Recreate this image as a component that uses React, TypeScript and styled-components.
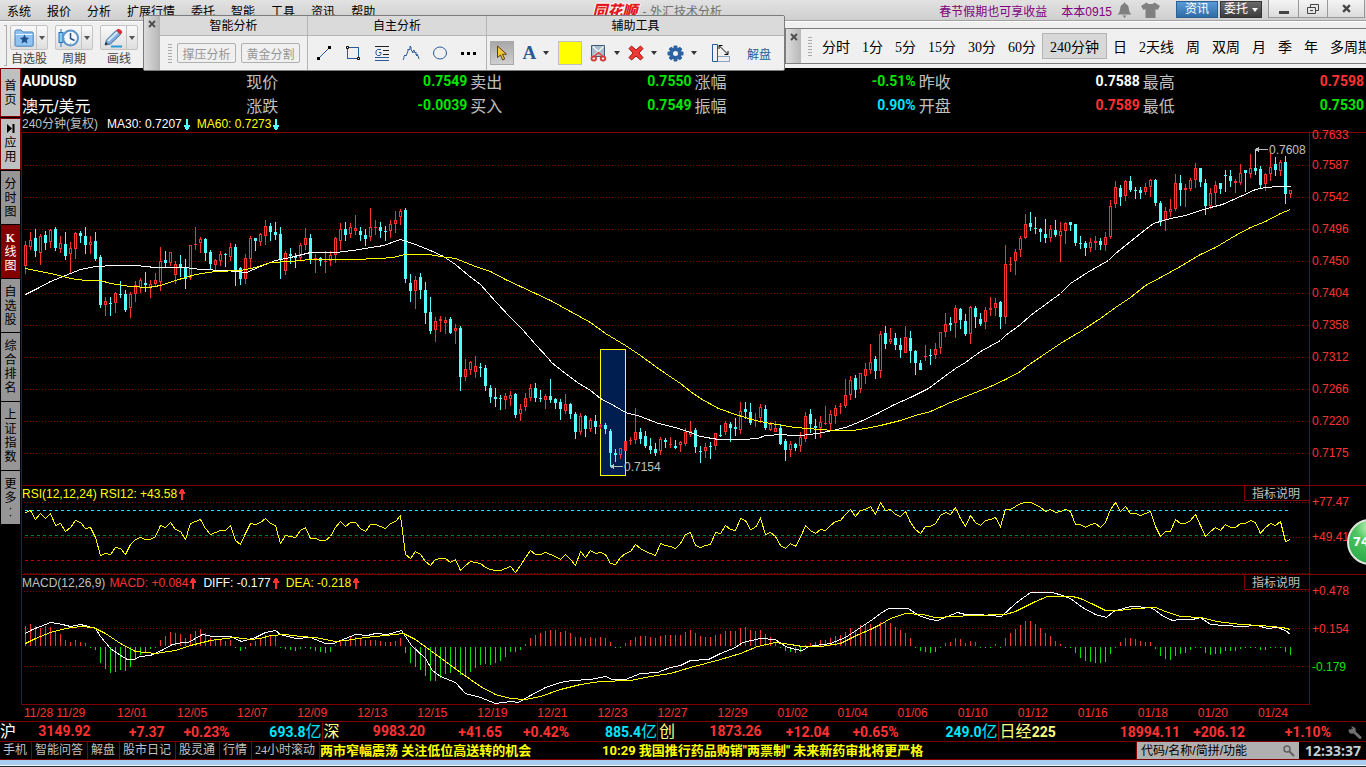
import React from 'react';
import styled, { createGlobalStyle, css } from 'styled-components';

const MAROON = '#800000';
const RED = '#ff3232';
const GREEN = '#00e600';
const CYAN = '#00e5ff';
const CANDLE_DOWN = '#54ffff';
const SANS = '"Liberation Sans", "Noto Sans CJK SC", sans-serif';
const SERIF = '"Liberation Serif", "Noto Sans CJK SC", serif';
const BOLD_NUM = 'Roboto, "Noto Sans CJK SC", sans-serif';

const GlobalStyle = createGlobalStyle`
  * { box-sizing: border-box; }
  body { margin: 0; background: #000; font-family: ${SANS}; font-size: 12px; overflow: hidden; }
  button { margin: 0; padding: 0; border: 0; background: none; font: inherit; color: inherit; white-space: nowrap; cursor: pointer; }
  a { color: inherit; text-decoration: none; white-space: nowrap; }
  svg { display: block; }
`;

/* ---------- market data ---------- */

const STEP = 5;
const FIRST_X = 25;
const xOf = (i: number) => FIRST_X + i * STEP;

// Each bar is direction, high, low, body top, body bottom, in thirds of a pixel below the base.
const SESSIONS: { base: number; bars: string }[] = [
  {
    base: 60,
    bars: `r 543 643 555 618|r 515 570 540 561|c 507 591 534 573|r 522 614 528 579|c 513 570 524 549|r 507 564 510 546|c 501 573 507 563|r 528 579 549 567|c 516 600 552 588|r 545 643 564 582|r 516 597 519 567|c 514 549 519 528|c 501 582 528 556|r 528 582 546 555|c 516 603 543 598|c 585 744 591 735|r 711 768 723 735|c 711 768 729 732|r 696 759 699 730|c 663 714 702 705|c 690 756 702 750|r 696 774 702 744|r 663 726 675 702|r 654 699 660 684|c 636 696 669 675|r 660 714 672 682|r 639 678 660 672|r 561 693 603 666|c 573 621 600 609|r 576 618 577 609|r 603 672 612 645|c 585 651 612 621|c 597 687 624 657|r 555 660 555 654|r 501 570 552 555|r 531 579 537 549|c 534 603 537 579|c 570 630 576 612|r 597 630 600 615|r 573 618 582 603|c 579 621 582 585|r 549 603 561 591|c 552 678 561 636|c 621 675 624 657|r 582 672 594 657|r 528 627 534 597|c 534 573 534 543|r 519 558 522 546|r 480 555 498 528|c 489 543 498 516|c 486 540 517 524|c 501 657 522 600|r 573 645 579 633|c 564 612 582 588|c 579 624 591 594|r 549 603 555 594|r 504 570 534 555|c 522 612 534 597|r 582 639 594 597|c 591 618 594 603|r 573 639 603 607|r 573 618 585 603|r 531 609 535 585`,
  },
  {
    base: 190,
    bars: `r 99 180 117 153|c 96 153 117 135|r 99 144 111 132|r 75 135 114 123|c 111 153 123 135|c 117 168 135 147|r 54 153 111 141|r 90 135 111 114|c 96 144 111 123|c 108 153 123 126|r 90 144 102 123|r 63 129 90 102|r 57 105 63 81|c 54 279 60 267|c 252 336 279 303|r 258 357 270 303|c 249 327 261 300|c 276 402 300 369|c 321 432 366 423|r 381 456 393 420|r 378 426 387 393|r 381 432 390 399|c 381 432 387 429|r 402 462 414 423|c 408 603 414 561|r 507 573 537 561|r 513 555 516 540|r 498 564 528 546|c 519 561 531 534|c 525 603 534 588|c 585 639 594 621|c 594 651 621 627|c 615 660 624 627|r 609 657 618 630|r 603 648 615 627|c 609 684 612 675|r 642 693 657 672|r 609 663 624 651|r 582 633 594 624|c 579 636 594 624|c 600 636 624 627|r 612 657 618 630|c 567 639 618 630|c 624 657 627 639|c 627 690 636 657|r 612 672 642 663|c 639 687 642 672|c 666 747 672 726|r 669 735 678 726|c 675 741 678 717|r 684 726 690 717|c 675 732 693 711|r 702 717 706 712|c 699 732 705 717|c 717 831 723 789|c 777 816 789 795|r 774 807 774 795|f 753 783 753 783|r 741 765 750 753|r 654 762 726 750|c 714 762 726 747|c 723 774 738 768|c 744 792 768 780|c 759 798 777 789|r 741 795 747 783|c 744 774 750 756|r 741 774 762 765|c 750 777 768 774`,
  },
  {
    base: 290,
    bars: `r 453 486 456 465|r 414 468 426 462|r 393 441 423 435|c 414 489 420 471|c 468 519 483 486|r 459 504 471 483|c 456 507 468 471|r 429 480 429 468|c 405 441 435 438|r 393 435 399 426|c 396 456 402 414|c 384 438 411 417|r 336 432 363 420|c 336 387 357 366|c 339 405 366 399|r 369 411 390 393|r 342 399 351 384|c 345 420 357 414|r 396 423 402 420|r 393 426 414 426|c 402 465 414 462|c 447 513 453 480|r 453 501 462 480|c 459 483 462 474|r 426 486 441 468|r 366 456 378 447|c 357 429 372 402|c 387 447 408 414|r 378 444 396 414|r 348 405 399 402|r 360 420 372 402|r 345 402 354 378|r 339 372 348 351|r 267 354 315 348|r 258 330 270 315|c 255 324 264 300|r 249 309 249 297|r 219 282 237 258|r 162 252 216 240|c 198 267 207 243|r 123 264 132 243|c 108 177 129 162|r 114 162 147 156|c 129 180 144 165|c 144 204 165 180|r 108 189 141 189|c 123 219 144 183|c 180 255 183 219|c 210 240 219 240|r 165 213 198 201|c 177 225 195 198|r 159 207 177 195|r 126 192 126 174|r 69 141 102 126|c 81 123 99 105|r 45 144 54 99|c 54 117 57 90|c 72 138 93 132|r 48 162 51 132|c 48 114 54 81|c 69 108 87 102|r 51 117 60 96|r 21 78 54 60|r 24 78 39 54|c 33 117 36 81`,
  },
  {
    base: 120,
    bars: `r 375 612 432 591|r 411 456 432 435|r 387 465 396 423|r 348 411 354 390|r 282 357 312 354|c 276 333 309 321|c 291 342 324 327|c 324 366 327 336|c 297 369 342 354|r 315 366 327 354|c 300 351 330 345|r 306 426 333 348|r 306 372 309 333|c 306 333 306 315|c 312 378 312 369|c 348 387 369 372|c 363 408 369 384|r 354 396 366 384|r 348 390 363 369|c 354 390 363 375|r 336 393 351 375|r 240 357 258 351|r 183 264 201 252|c 195 258 204 231|r 180 243 183 228|c 168 216 183 210|c 201 237 210 213|c 201 237 210 219|r 189 225 201 216|r 177 231 180 201|c 177 258 180 249|c 243 318 249 303|r 261 333 273 300|r 237 291 267 276|r 162 273 189 267|c 165 258 189 210|r 192 261 204 210|r 174 213 180 207|r 129 204 144 180|c 144 201 144 186|c 177 285 189 258|r 204 267 219 258|r 183 255 195 219|c 189 222 189 207|c 150 216 165 168|c 150 201 168 183|r 177 219 183 189|r 132 195 159 189|c 150 216 150 159|r 102 174 144 162|c 87 165 144 153|c 138 207 147 195|r 159 213 162 192|r 99 183 141 162|c 111 168 132 150|r 120 168 126 153|c 108 252 126 222|r 210 234 210 222`,
  },
];

type Candle = { kind: string; high: number; low: number; top: number; bottom: number };

const CANDLES: Candle[] = SESSIONS.flatMap(({ base, bars }) =>
  bars.split('|').map((bar) => {
    const [kind, ...n] = bar.split(' ');
    const [high, low, top, bottom] = n.map((v) => base + Math.round(Number(v) / 3));
    return { kind, high, low, top, bottom };
  }),
);

const MA30 =
  '25,294 37,288 50,281 65,275 80,269 95,266 115,265 135,265 155,267 185,267 200,269 225,270 246,272 260,266 275,260 290,257 310,252 335,252 352,250 365,248 383,245 400,239 415,244 430,250 443,256 455,264 468,275 480,284 495,301 510,317 522,329 535,344 548,358 551,362 565,373 577,382 590,390 600,398 615,406 625,412 640,416 658,423 675,427 690,432 700,436 718,439 742,439 757,438 765,435 782,434 790,435 800,435 817,433 832,430 845,427 860,421 877,413 892,405 910,397 928,388 940,379 955,368 965,362 980,351 1000,340 1005,335 1020,324 1030,315 1045,304 1060,293 1070,283 1087,272 1108,260 1115,253 1130,241 1145,229 1153,223 1170,218 1185,215 1197,211 1210,207 1222,204 1240,196 1255,189 1265,187 1278,186 1290,186';
const MA60 =
  '25,268 40,271 55,274 70,278 85,280 100,280 110,283 130,286 148,287 160,285 175,280 195,274 215,271 240,270 255,267 270,262 290,261 310,259 353,259 378,258 393,257 400,255 405,254 428,254 440,256 455,258 465,262 475,266 490,271 505,279 520,286 535,293 550,300 570,311 590,322 605,333 625,345 640,355 655,366 668,375 680,383 690,391 700,398 718,408 735,414 755,420 770,423 795,427 820,429 832,430 852,430 865,428 880,425 900,420 915,415 930,411 950,402 970,394 990,386 1005,379 1020,371 1026,366 1045,353 1060,343 1080,331 1100,318 1115,307 1130,297 1145,285 1160,277 1180,266 1200,254 1215,247 1235,235 1250,227 1265,221 1280,213 1290,209';
const DIFF =
  '25,633 32,629 40,626 50,622 62,624 70,626 80,624 88,626 95,628 100,636 110,648 120,655 127,659 133,659 140,656 150,655 163,649 172,644 182,642 188,642 202,634 212,636 230,636 241,641 255,637 265,632 275,630 280,634 295,638 310,637 325,643 333,643 345,638 355,634 367,635 375,633 387,634 401,630 411,645 425,658 432,670 440,676 455,682 465,693 480,697 495,703 510,701 518,702 530,695 545,687 560,682 572,680 590,679 605,676 612,679 625,679 640,673 657,672 670,667 680,665 690,660 708,659 720,653 735,647 742,642 760,638 775,639 785,646 795,649 802,650 808,646 830,643 845,637 860,627 872,619 880,613 888,608 908,608 918,615 930,619 937,620 942,618 957,612 965,614 977,614 990,615 1001,616 1015,603 1030,592 1052,592 1062,595 1070,598 1082,607 1095,614 1106,617 1113,611 1130,606 1150,607 1155,610 1163,616 1172,620 1180,619 1192,619 1200,617 1210,624 1225,625 1240,626 1257,625 1267,628 1277,627 1285,630 1290,634';
const DEA =
  '25,643 35,638 50,632 65,628 80,626 93,627 105,633 120,643 135,651 155,653 175,650 190,645 210,640 225,638 235,637 250,639 260,638 270,635 285,634 300,636 315,637 335,641 345,640 365,637 385,635 403,633 415,639 430,650 445,661 460,672 480,686 495,694 510,698 525,699 540,696 560,689 580,684 600,681 630,680 650,676 670,673 690,667 705,663 720,659 740,653 757,646 775,642 790,644 802,646 820,646 840,643 858,634 870,629 880,624 890,618 905,613 922,614 935,617 955,616 970,615 1005,614 1015,611 1027,605 1035,601 1047,596 1072,596 1080,598 1093,604 1105,610 1118,610 1135,608 1155,607 1165,611 1180,616 1200,617 1217,621 1240,624 1260,625 1282,627 1290,629';

const RSI = [
  97, 91, 118, 100, 115, 100, 136, 130, 153, 142, 121, 127, 145, 142, 170, 226, 220, 223, 202, 205, 223, 193, 178, 172,
  178, 176, 169, 136, 142, 127, 148, 154, 176, 128, 124, 118, 145, 163, 157, 151, 151, 136, 181, 193, 160, 130, 133,
  127, 115, 129, 136, 190, 166, 169, 172, 151, 142, 174, 175, 181, 181, 169, 142, 124, 139, 127, 127, 145, 154, 133,
  133, 139, 145, 130, 122, 106, 223, 235, 214, 222, 244, 256, 238, 235, 235, 247, 238, 271, 256, 243, 247, 250, 262,
  268, 271, 271, 265, 258, 277, 256, 232, 211, 223, 223, 217, 223, 229, 238, 223, 238, 256, 214, 232, 211, 220, 216,
  221, 250, 253, 232, 218, 213, 193, 205, 213, 220, 226, 190, 196, 199, 205, 190, 163, 157, 195, 202, 195, 192, 157,
  160, 136, 147, 151, 115, 119, 148, 140, 115, 163, 157, 169, 196, 205, 190, 199, 172, 136, 151, 160, 148, 151, 136,
  124, 121, 103, 86, 109, 91, 87, 79, 103, 67, 91, 86, 103, 109, 94, 127, 148, 160, 139, 139, 130, 106, 97, 101, 82,
  115, 139, 106, 127, 136, 121, 118, 112, 139, 88, 88, 79, 70, 67, 67, 73, 80, 94, 86, 97, 94, 86, 94, 133, 133, 142,
  133, 130, 142, 127, 88, 67, 94, 79, 100, 100, 106, 100, 92, 139, 169, 154, 154, 118, 130, 130, 121, 103, 136, 169,
  154, 142, 151, 133, 142, 142, 130, 130, 121, 127, 160, 142, 130, 136, 124, 184, 178,
];

const HISTOGRAM = [
  20, 22, 20, 18, 20, 19, 15, 12, 6, 4, 6, 4, 3, -1, -3, -16, -22, -26, -25, -23, -24, -20, -13, -8, -6, -2, -1, 6, 10,
  14, 13, 12, 8, 12, 15, 17, 13, 8, 6, 6, 5, 6, -1, -4, -2, 3, 5, 8, 11, 11, 10, -1, -2, -3, -4, -2, -1, -2, -4, -5,
  -6, -5, 1, 5, 6, 9, 9, 8, 6, 6, 6, 5, 4, 4, 5, 8, -6, -16, -20, -23, -29, -34, -34, -31, -27, -26, -23, -28, -28,
  -25, -21, -18, -17, -18, -16, -14, -10, -5, -5, -3, 2, 8, 11, 13, 15, 16, 16, 14, 15, 13, 9, 9, 8, 9, 8, 9, 8, 4, -1,
  -1, 3, 6, 9, 10, 10, 9, 8, 10, 11, 11, 11, 11, 14, 16, 13, 10, 9, 9, 11, 12, 15, 15, 15, 18, 19, 16, 15, 16, 12, 9,
  4, -1, -4, -5, -6, -5, 1, 3, 4, 6, 6, 8, 10, 11, 14, 18, 16, 21, 21, 22, 20, 24, 23, 23, 19, 16, 13, 8, -1, -4, -5,
  -6, -5, -1, 3, 4, 8, 7, 3, 5, 4, -1, -1, -1, 2, -1, 8, 13, 17, 21, 25, 25, 22, 18, 13, 10, 5, 2, -1, -1, -6, -11,
  -14, -15, -16, -16, -15, -7, -1, 4, 8, 8, 7, 5, 4, 4, -2, -9, -12, -13, -9, -7, -6, -3, -1, -1, -6, -8, -7, -7, -4,
  -4, -4, -2, -1, -1, -1, -3, -3, -1, -1, -1, -5, -8,
];

const DATES = [
  '12/01', '12/05', '12/07', '12/09', '12/13', '12/15', '12/19', '12/21', '12/23', '12/27',
  '12/29', '01/02', '01/04', '01/06', '01/10', '01/12', '01/16', '01/18', '01/20', '01/24',
];
const PRICES = ['0.7587', '0.7542', '0.7496', '0.7450', '0.7404', '0.7358', '0.7312', '0.7266', '0.7220', '0.7175'];

/* ---------- frame ---------- */

const Page = styled.div`
  position: relative;
  display: flex;
  flex-direction: column;
  min-height: 100vh;
  overflow: hidden;
  background: #000;
`;

const TitleBar = styled.header`
  display: flex;
  align-items: center;
  height: 20px;
  padding-left: 7px;
  background: linear-gradient(#e2e2e2, #cfcfcf);
  color: #000;
`;

const Menu = styled.nav`
  display: flex;
  gap: 16px;
`;

const AppTitle = styled.div`
  display: flex;
  align-items: center;
  gap: 5px;
  margin: 0 auto;
  color: #707070;
`;

const Logo = styled.span`
  font: italic 900 15px/20px "Noto Sans CJK SC", sans-serif;
  color: #e01820;
  text-shadow: 1px 0 #fff, -1px 0 #fff, 0 1px #fff, 0 -1px #fff;
`;

const TitleTools = styled.div`
  display: flex;
  align-items: center;
  height: 100%;
  color: #800080;
`;

const TitleLink = styled.a`
  margin-right: 14px;
`;

const UserLink = styled.a`
  margin-right: 5px;
`;

const IconButton = styled.button<{ $after?: number }>`
  margin-right: ${(p) => p.$after ?? 9}px;
  color: #808080;
`;

const PillButton = styled.button<{ $blue?: boolean }>`
  width: 42px;
  height: 17px;
  margin: 0 2px 1px 0;
  border: 1px solid ${(p) => (p.$blue ? '#2c5f92' : '#333')};
  background: ${(p) => (p.$blue ? 'linear-gradient(#5a9ad6, #2f6ca8)' : 'linear-gradient(#6a6a6a, #3c3c3c)')};
  color: #fff;
  line-height: 15px;
  display: flex;
  align-items: center;
  justify-content: center;
  gap: 4px;
`;

const WindowButtons = styled.div`
  display: flex;
  height: 18px;
  margin: 0 1px 2px 4px;
  border: 1px solid #999;
  border-top: 0;
`;

const WindowButton = styled.button<{ $wide?: boolean }>`
  display: grid;
  place-items: center;
  width: ${(p) => (p.$wide ? 37 : 29)}px;
  color: #444;
  background: linear-gradient(#f4f4f4, #dcdcdc);
  & + & {
    border-left: 1px solid #999;
  }
`;

const Toolbar = styled.div`
  display: flex;
  gap: 7px;
  height: 48px;
  padding: 4px 0 0 4px;
  border-top: 1px solid #a0a0a0;
  background: #f0f0f0;
  box-shadow: inset 0 1px #fff;
`;

const ToolbarGrip = styled.span`
  width: 3px;
  margin: 0 -4px 2px 0;
  border: 1px solid #aaa;
  border-left: 0;
`;

const Tool = styled.div`
  display: flex;
  flex-direction: column;
  align-items: center;
  color: #444;
  line-height: 18px;
`;

const SplitButton = styled.div`
  display: flex;
  height: 25px;
  border: 1px solid #c4c4c4;
  border-radius: 2px;
  background: linear-gradient(#fafafa, #dedede);
`;

const SplitMain = styled.button`
  display: grid;
  place-items: center;
  width: 25px;
`;

const SplitCaret = styled.button`
  display: grid;
  place-items: center;
  width: 11px;
  border-left: 1px solid #c4c4c4;
  color: #555;
`;

const Caret = styled.i`
  width: 0;
  height: 0;
  border: 3px solid transparent;
  border-top: 4px solid currentColor;
  border-bottom: 0;
`;

/* ---------- floating palettes ---------- */

const palette = css`
  position: absolute;
  display: flex;
  border: 1px solid #7c7c7c;
  background: #f0f0f0;
  color: #000;
`;

const DrawPalette = styled.section`
  ${palette}
  left: 143px;
  top: 15px;
  width: 642px;
  height: 56px;
  border-radius: 2px;
`;

const PeriodPalette = styled.section`
  ${palette}
  left: 785px;
  right: 0;
  top: 28px;
  height: 36px;
  overflow: hidden;
  border-right: 0;
  font: 14px ${SERIF};
`;

const PaletteClose = styled.button`
  flex: none;
  width: 15px;
  padding-top: 4px;
  display: flex;
  justify-content: center;
  align-items: flex-start;
  background: linear-gradient(90deg, #dcdcdc, #b8b8b8);
  color: #505050;
`;

const PaletteGroup = styled.div<{ $grow: number }>`
  flex: ${(p) => p.$grow} 0 0;
  display: flex;
  flex-direction: column;
  border-left: 1px solid #b4b4b4;
`;

const GroupTitle = styled.h2`
  margin: 0;
  height: 20px;
  border-bottom: 1px solid #b4b4b4;
  background: #dadada;
  font: 12px/20px ${SANS};
  text-align: center;
`;

const GroupBody = styled.div<{ $gap: number; $pad: number }>`
  flex: 1;
  display: flex;
  align-items: center;
  gap: ${(p) => p.$gap}px;
  padding-left: ${(p) => p.$pad}px;
`;

const Grip = styled.span`
  flex: none;
  width: 4px;
  height: 20px;
  background: radial-gradient(circle, #aaa 1px, transparent 1px) 0 0 / 2px 3px;
  margin: auto 0;
`;

const OutlineButton = styled.button`
  width: 59px;
  height: 20px;
  border: 1px solid #b0b0b0;
  border-radius: 2px;
  color: #969696;
`;

const DrawButton = styled.button<{ $w: number }>`
  display: flex;
  align-items: center;
  justify-content: center;
  gap: 7px;
  width: ${(p) => p.$w}px;
  height: 24px;
  color: #2a5a96;
  ${Caret} {
    color: #333;
  }
`;

const PressedButton = styled(DrawButton)`
  border: 1px solid #a8a8a8;
  background: linear-gradient(#a8a8a8, #cfcfcf);
`;

const Swatch = styled.button`
  width: 24px;
  height: 24px;
  border: 1px solid #c0c0c0;
  background: #ff0;
`;

const LetterA = styled.span`
  font: bold 19px "Liberation Serif", serif;
`;

const Periods = styled.div`
  display: flex;
  align-items: center;
  padding-left: 4px;
`;

const PeriodGrip = styled(Periods)`
  padding-left: 7px;
`;

const PeriodButton = styled.button<{ $on?: boolean }>`
  height: 26px;
  padding: 0 6px;
  ${(p) =>
    p.$on &&
    css`
      padding: 0 7px;
      border: 1px solid #b4b4b4;
      background: #d8d8d8;
    `}
`;

/* ---------- body ---------- */

const Main = styled.main`
  flex: 1;
  display: flex;
`;

const SideTabs = styled.nav`
  flex: none;
  display: flex;
  flex-direction: column;
  gap: 1px;
  width: 21px;
  padding-right: 1px;
`;

const SideTab = styled.button<{ $h: number; $tone: 'light' | 'grey' | 'active' }>`
  display: flex;
  flex-direction: column;
  align-items: center;
  justify-content: center;
  height: ${(p) => p.$h}px;
  margin-left: 1px;
  line-height: 14px;
  background: #969696;
  color: #000;
  > svg {
    margin-bottom: 3px;
  }
  ${(p) =>
    p.$tone === 'light' &&
    css`
      margin: 0 -1px 0 0;
      border: 1px solid ${MAROON};
      background: #c0c0c0;
    `}
  ${(p) =>
    p.$tone === 'active' &&
    css`
      background: ${MAROON};
      color: #fff;
    `}
`;

const SerifBold = styled.b`
  font-family: "Liberation Serif", serif;
`;

const Dot = styled.span`
  line-height: 7px;
`;

const Content = styled.div`
  flex: 1;
  min-width: 0;
  display: flex;
  flex-direction: column;
`;

const Quotes = styled.dl`
  display: grid;
  grid-template-columns: repeat(6, 1fr);
  grid-auto-rows: 24px;
  align-items: center;
  margin: 0;
  padding-top: 1px;
`;

const Quote = styled.div`
  display: flex;
  justify-content: space-between;
  align-items: center;
  padding: 0 2px 0 1px;
  white-space: nowrap;
`;

const QuoteLabel = styled.dt`
  font-size: 16px;
  color: #c0c0c0;
`;

const QuoteValue = styled.dd<{ $c: string }>`
  margin: 0;
  font: bold 14px ${BOLD_NUM};
  color: ${(p) => p.$c};
`;

const PairName = styled.div<{ $bold?: boolean }>`
  padding-left: 1px;
  color: #fff;
  font: ${(p) => (p.$bold ? `bold 14px ${BOLD_NUM}` : `16px ${SANS}`)};
`;

const Legend = styled.div<{ $h: number; $pad?: number }>`
  display: flex;
  align-items: center;
  height: ${(p) => p.$h}px;
  padding-left: ${(p) => p.$pad ?? 0}px;
  line-height: ${(p) => p.$h}px;
  white-space: pre;
`;

const LegendItem = styled.span<{ $c: string; $gap?: number }>`
  display: flex;
  align-items: center;
  gap: 2px;
  margin-right: ${(p) => p.$gap ?? 0}px;
  color: ${(p) => p.$c};
`;

const HelpButton = styled.button`
  align-self: flex-start;
  width: 65px;
  height: 15px;
  margin-left: auto;
  padding-right: 2px;
  border: solid ${MAROON};
  border-width: 0 0 1px 1px;
  color: #c0c0c0;
  line-height: 16px;
`;

const Panel = styled.section<{ $grow?: boolean }>`
  flex: ${(p) => (p.$grow ? '1 0 353px' : 'none')};
  display: flex;
  border-top: 1px solid ${MAROON};
`;

const Plot = styled.div`
  flex: 1;
  min-width: 0;
  display: flex;
  flex-direction: column;
  border-left: 1px solid ${MAROON};
`;

const Chart = styled.svg<{ $h: number }>`
  width: 100%;
  height: ${(p) => p.$h}px;
  flex: 1 0 auto;
`;

const Axis = styled.div<{ $pad?: number; $gap?: number }>`
  flex: none;
  display: flex;
  flex-direction: column;
  gap: ${(p) => p.$gap ?? 0}px;
  width: 57px;
  padding: ${(p) => p.$pad ?? 0}px 0 0 2px;
  border-left: 1px solid ${MAROON};
  color: ${RED};
`;

const AxisMark = styled.span<{ $h: number; $c?: string; $lh?: number }>`
  height: ${(p) => p.$h}px;
  line-height: ${(p) => p.$lh ?? p.$h}px;
  color: ${(p) => p.$c ?? RED};
`;

const DateRow = styled.div`
  display: flex;
  height: 17px;
  margin-right: 56px;
  padding-right: 7px;
  border-top: 1px solid ${MAROON};
  color: ${RED};
  line-height: 17px;
  text-align: center;
`;

const FirstDates = styled.span`
  display: flex;
  gap: 3px;
  width: 81px;
  padding-left: 3px;
`;

const DateMark = styled.span`
  flex: 1;
`;

/* ---------- footer ---------- */

const IndexRow = styled.div`
  display: flex;
  height: 20px;
  border-top: 1px solid ${MAROON};
  font: bold 14px ${BOLD_NUM};
  color: ${RED};
`;

const IndexGroup = styled.div<{ $basis: number; $cols: string }>`
  flex: ${(p) => p.$basis} 0 0;
  display: grid;
  grid-template-columns: ${(p) => p.$cols};
  align-items: center;
  text-align: right;
  white-space: nowrap;
  & + & {
    border-left: 1px solid ${MAROON};
    padding-left: 1px;
  }
`;

const IndexName = styled.div<{ $c: string }>`
  display: flex;
  align-items: center;
  justify-content: space-between;
  line-height: 19px;
  > span {
    color: ${(p) => p.$c};
  }
`;

const Big = styled.span`
  font: 16px/19px ${SANS};
`;

const Turnover = styled.span`
  display: flex;
  align-items: center;
  justify-content: flex-end;
  color: ${CYAN};
`;

const SettingsButton = styled.button`
  justify-self: end;
  margin-right: 4px;
`;

const StatusRow = styled.div`
  display: flex;
  height: 18px;
  border-top: 1px solid ${MAROON};
  color: #c0c0c0;
  font: 12px/17px ${SERIF};
`;

const StatusLink = styled.a`
  flex: none;
  padding: 0 4px 0 3px;
  border-right: 1px solid ${MAROON};
`;

const Ticker = styled.div`
  flex: 1;
  min-width: 0;
  display: flex;
  overflow: hidden;
  font: bold 13px/17px Roboto, "Noto Sans CJK SC", sans-serif;
  color: #ff0;
`;

const News = styled.a<{ $w?: number }>`
  flex: none;
  ${(p) => p.$w && `width: ${p.$w}px;`}
`;

const Search = styled.label`
  flex: none;
  display: flex;
  align-items: center;
  width: 163px;
  padding: 0 4px;
  border-left: 1px solid ${MAROON};
  background: #b0b0b0;
`;

const SearchInput = styled.input`
  flex: 1;
  min-width: 0;
  padding: 0;
  border: 0;
  outline: 0;
  background: none;
  font: 12px ${SANS};
  color: #000;
  &::placeholder {
    color: #000;
    opacity: 1;
  }
`;

const Clock = styled.time`
  flex: none;
  width: 67px;
  padding-right: 5px;
  font: bold 14px/17px "Noto Sans", sans-serif;
  color: #c4d0d4;
  text-align: right;
`;

const Desktop = styled.div`
  height: 8px;
  border-top: 1px solid ${MAROON};
  border-bottom: 1px solid #1c2a30;
  background: #a9cbec;
  box-shadow: inset 0 -1px #f4f8fc;
`;

const SpeedBall = styled.button`
  position: absolute;
  right: -27px;
  top: 519px;
  width: 46px;
  height: 46px;
  padding-right: 18px;
  border: 2px solid #dfe6df;
  border-radius: 50%;
  background: radial-gradient(circle at 50% 15%, #c8f5c4, #4fc660 35%, #2fae4c 80%, #16833a);
  color: #fff;
  font: bold 12px "DejaVu Sans", sans-serif;
`;

/* ---------- icons ---------- */

const CrossIcon = ({ size = 8 }: { size?: number }) => (
  <svg width={size} height={size} viewBox="0 0 8 8" stroke="currentColor" strokeWidth="2">
    <path d="M1 1l6 6M7 1l-6 6" />
  </svg>
);

const Arrow = ({ up, color }: { up?: boolean; color: string }) => (
  <svg width="6" height="11" viewBox="0 0 6 11" fill={color} shapeRendering="crispEdges">
    {up ? (
      <path d="M2 0h2v1h1v2h1v2H4v6H2V5H0V3h1V1h1z" />
    ) : (
      <path d="M2 11h2v-1h1V8h1V6H4V0H2v6H0v2h1v2h1z" />
    )}
  </svg>
);

const BellIcon = () => (
  <svg width="15" height="16" viewBox="0 0 15 16" fill="currentColor">
    <path d="M7.500 0l1.300 2c2.200.6 2.900 2.300 3.100 5 .2 2.300.8 3.800 2.600 5.500H.5C2.300 10.800 2.900 9.300 3.100 7c.2-2.700.9-4.400 3.100-5zM5.500 13.500h4L7.500 16z" />
  </svg>
);

const ShirtIcon = () => (
  <svg width="19" height="16" viewBox="0 0 19 16" fill="currentColor">
    <path d="M5.500.5C7 2.500 12 2.500 13.500.5L19 4l-2.500 4-2-1v9h-10V7l-2 1L0 4z" />
  </svg>
);

const FolderStarIcon = () => (
  <svg width="20" height="18" viewBox="0 0 20 18">
    <path d="M1 2.500Q1 1 2.500 1H7l2 2h9q1.200 0 1.200 1.200V16q0 1.200-1.200 1.200H2.200Q1 17.200 1 16z" fill="#8fc4f2" stroke="#4a80b8" />
    <path d="M1.500 5.500h17" stroke="#e4f3ff" />
    <path d="M10.500 5.500l1.400 3.100 3.300.3-2.500 2.200.8 3.300-3-1.700-3 1.700.8-3.300-2.500-2.200 3.300-.3z" fill="#1c4f8c" />
  </svg>
);

const ClockIcon = () => (
  <svg width="21" height="20" viewBox="0 0 21 20">
    <path d="M3 1v18" stroke="#2a6fb4" />
    <rect x="1" y="4.500" width="4" height="10" fill="#7fd0f5" stroke="#2a6fb4" />
    <circle cx="12.500" cy="10" r="7.500" fill="#f2f8fd" stroke="#5c93c8" strokeWidth="2" />
    <path d="M12.500 5v5.500l4 2" fill="none" stroke="#244f80" strokeWidth="1.500" />
    <path d="M12.500 15v1.500M7 10.500H5.500" stroke="#8aa" />
  </svg>
);

const PencilIcon = () => (
  <svg width="21" height="20" viewBox="0 0 21 20">
    <path d="M8 18.500h11" stroke="#2b9bd6" strokeWidth="2" fill="none" />
    <path d="M2 17l1.500-5L13 2.500l4.500 4L7.500 16z" fill="#7fb0e0" stroke="#4a6f9c" />
    <path d="M5 13L14.500 4" stroke="#d4e8fa" strokeWidth="2" />
    <path d="M13 2.500L15 .8q3.500.4 4.300 3.700l-1.800 2z" fill="#d8303a" />
    <path d="M2 17l.9-3 2 2z" fill="#222" />
  </svg>
);

const LineIcon = () => (
  <svg width="16" height="16" viewBox="0 0 16 16">
    <path d="M2 14L14 2" stroke="#2a5a96" />
    <path d="M1 12h3v3H1zM12 1h3v3h-3z" fill="#000" />
  </svg>
);

const RectIcon = () => (
  <svg width="16" height="16" viewBox="0 0 16 16" fill="none">
    <rect x="2.500" y="2.500" width="11" height="11" stroke="#2a5a96" />
    <path d="M1.500 1.500h2v2h-2zM12.500 12.500h2v2h-2z" stroke="#000" fill="#fff" />
  </svg>
);

const GannIcon = () => (
  <svg width="16" height="16" viewBox="0 0 16 16" fill="none" shapeRendering="crispEdges">
    <path d="M1 1.500h14M9 5.500h6M9 9.500h6" stroke="#222" />
    <path d="M1 12.500h14M1 15.500h14" stroke="#2a5a96" />
    <path d="M7 4.500H3.500L2 6v3l1.500 1.500H6L7 9V7.500H5" stroke="#2a5a96" shapeRendering="auto" />
  </svg>
);

const WaveIcon = () => (
  <svg width="18" height="16" viewBox="0 0 18 16" fill="none" stroke="#2a5a96">
    <path d="M1 15l1-2v-2l1-1 1 1 2-5V4l1 1 1-1V1l1 1v3l1 1 1 2V6l1-1 1 3 1-1v3l1 1v-2l1 2 1 3" />
  </svg>
);

const CircleIcon = () => (
  <svg width="16" height="16" viewBox="0 0 16 16" fill="none" stroke="#2a5a96">
    <ellipse cx="8" cy="8" rx="6.500" ry="6" />
  </svg>
);

const MoreIcon = () => (
  <svg width="16" height="3" viewBox="0 0 16 3" fill="#000">
    <path d="M0 0h3v3H0zM6 0h3v3H6zM12 0h3v3h-3z" />
  </svg>
);

const PointerIcon = () => (
  <svg width="12" height="17" viewBox="0 0 12 17">
    <path d="M1.500 1v11.500l3-2.500 2.200 5 2-1-2.200-4.800h4z" fill="#f2c832" stroke="#5a4408" />
  </svg>
);

const PictureCutIcon = () => (
  <svg width="17" height="18" viewBox="0 0 17 18" fill="none">
    <path d="M1.500 1.500h13v11h-13z" fill="#a9bccb" stroke="#3f5c78" />
    <path d="M3 2.500l9 9M13.500 2.500l-9 9" stroke="#eef4f8" strokeWidth="1.500" />
    <path d="M4.500 12l4-3.500 4 3.500" stroke="#d43a3a" strokeWidth="1.500" />
    <ellipse cx="3.800" cy="14.500" rx="2.300" ry="2" stroke="#d43a3a" strokeWidth="1.800" />
    <ellipse cx="13" cy="14.500" rx="2.300" ry="2" stroke="#d43a3a" strokeWidth="1.800" />
  </svg>
);

const DeleteIcon = () => (
  <svg width="16" height="16" viewBox="0 0 16 16">
    <path d="M3.500 1L8 5l4.500-4L15 3.500 11 8l4 4.500-2.500 2.500L8 11l-4.500 4L1 12.500 5 8 1 3.500z" fill="#ec3a34" stroke="#a81410" />
  </svg>
);

const GearIcon = () => (
  <svg width="17" height="17" viewBox="-8.500 -8.500 17 17" fill="#2a62a4">
    {[0, 45, 90, 135].map((a) => (
      <rect key={a} x="-2" y="-8" width="4" height="16" rx="1" transform={`rotate(${a})`} />
    ))}
    <circle r="6" />
    <circle r="2.500" fill="#f0f0f0" />
  </svg>
);

const MeasureIcon = () => (
  <svg width="19" height="19" viewBox="0 0 19 19" fill="none">
    <path d="M1.500 .5h5v17h-5z" stroke="#2a5a96" />
    <path d="M6.500 12.500h12v5h-12" stroke="#2a5a96" strokeDasharray="1 1" />
    <path d="M8.500 2l8 8" stroke="#000" />
    <path d="M8 5V1.500h3.500M17 7v3.500h-3.500" stroke="#000" />
  </svg>
);

const SkipIcon = () => (
  <svg width="9" height="9" viewBox="0 0 9 9" fill="#000">
    <path d="M1 0l5 4.500L1 9zM6.500 0H8.500v9h-2z" />
  </svg>
);

const WrenchIcon = () => (
  <svg width="14" height="13" viewBox="0 0 14 13">
    <path d="M4 4l8 7.500" stroke="#707070" strokeWidth="3" strokeLinecap="round" />
    <path d="M3 .5L5 3 3.500 4.500.8 3Q0 6 2.500 7.500q2 .8 4-.5Q8.500 5 7.500 2.500 6 0 3 .5z" fill="#707070" />
  </svg>
);

const SearchIcon = () => (
  <svg width="12" height="12" viewBox="0 0 12 12" fill="none" stroke="#606060">
    <circle cx="4" cy="4" r="3" strokeWidth="1.500" />
    <path d="M6.500 6.500l4.500 4.500" strokeWidth="2" />
  </svg>
);

const RestoreIcon = () => (
  <svg width="12" height="10" viewBox="0 0 12 10" fill="none" stroke="currentColor">
    <path d="M3.500 3V.5h8v6H9" />
    <path d="M.5 3.500h8v6h-8z" />
    <path d="M3 6.500h3" />
  </svg>
);

/* ---------- charts ---------- */

const GridLine = ({ y }: { y: number }) => (
  <line x1="24" x2="1309" y1={y + 0.5} y2={y + 0.5} stroke={MAROON} strokeDasharray="1 2" />
);

const Level = ({ y, color }: { y: number; color: string }) => (
  <line x1="25" x2="1289" y1={y + 0.5} y2={y + 0.5} stroke={color} strokeDasharray="3 3" />
);

const Trace = ({ points, color }: { points: string; color: string }) => (
  <polyline points={points} fill="none" stroke={color} transform="translate(0.5 0.5)" />
);

const CandleMark = ({ candle, x }: { candle: Candle; x: number }) => {
  const { kind, high, low, top, bottom } = candle;
  const h = Math.max(1, bottom - top);
  if (kind === 'r' && h > 2) {
    return (
      <path
        d={`M${x + 0.5} ${high}V${top}M${x + 0.5} ${bottom}V${low}M${x - 0.5} ${top + 0.5}h2v${h - 1}h-2z`}
        fill="none"
        stroke={RED}
      />
    );
  }
  return (
    <path
      d={`M${x} ${high}h1V${low}h-1zM${x - 1} ${top}h3v${h}h-3z`}
      fill={kind === 'c' ? CANDLE_DOWN : RED}
    />
  );
};

const PriceChart = () => (
  <Chart $h={352} viewBox="22 133 1287 352" preserveAspectRatio="none" shapeRendering="crispEdges">
    {PRICES.map((p, i) => (
      <GridLine key={p} y={165 + i * 32} />
    ))}
    <rect x="600.5" y="349.5" width="25" height="126" fill="#001f50" stroke="#ff0" />
    {CANDLES.map((c, i) => (
      <CandleMark key={i} candle={c} x={xOf(i)} />
    ))}
    <Trace points={MA30} color="#fff" />
    <Trace points={MA60} color="#ff0" />
    <g fill="#c0c0c0" fontSize="12" fontFamily={SANS}>
      <path d="M1255 149.500l4-3v2.500h9v1h-9v2.500z" />
      <text x="1269" y="154">0.7608</text>
      <path d="M610 466.500l4-3v2.500h9v1h-9v2.500z" />
      <text x="624" y="471">0.7154</text>
    </g>
  </Chart>
);

const RsiChart = () => (
  <Chart $h={72} viewBox="22 502 1287 72" preserveAspectRatio="none" shapeRendering="crispEdges">
    <GridLine y={502} />
    <GridLine y={537} />
    <GridLine y={573} />
    <Level y={510} color="#20e0ff" />
    <Level y={535} color="#008040" />
    <Level y={560} color="#c00000" />
    <Trace points={RSI.map((v, i) => `${xOf(i)},${480 + Math.round(v / 3)}`).join(' ')} color="#ff0" />
  </Chart>
);

const MacdChart = () => (
  <Chart $h={113} viewBox="22 591 1287 113" preserveAspectRatio="none" shapeRendering="crispEdges">
    <GridLine y={591} />
    <GridLine y={628} />
    <GridLine y={666} />
    {HISTOGRAM.map((v, i) => (
      <rect key={i} x={xOf(i)} y={v > 0 ? 646 - v : 647} width="1" height={Math.abs(v)} fill={v > 0 ? RED : GREEN} />
    ))}
    <Trace points={DIFF} color="#fff" />
    <Trace points={DEA} color="#ff0" />
  </Chart>
);

/* ---------- page content ---------- */

const MENU = ['系统', '报价', '分析', '扩展行情', '委托', '智能', '工具', '资讯', '帮助'];
const PERIODS = ['分时', '1分', '5分', '15分', '30分', '60分', '240分钟', '日', '2天线', '周', '双周', '月', '季', '年', '多周期'];
const STATUS = ['手机', '智能问答', '解盘', '股市日记', '股灵通', '行情', '24小时滚动'];

const TABS: { name: string; h: number; tone: 'light' | 'grey' | 'active' }[] = [
  { name: '首页', h: 49, tone: 'light' },
  { name: '应用', h: 52, tone: 'light' },
  { name: '分时图', h: 53, tone: 'grey' },
  { name: 'K线图', h: 53, tone: 'active' },
  { name: '自选股', h: 53, tone: 'grey' },
  { name: '综合排名', h: 68, tone: 'grey' },
  { name: '上证指数', h: 68, tone: 'grey' },
  { name: '更多··', h: 53, tone: 'grey' },
];

const TabGlyph = ({ ch }: { ch: string }) => {
  if (ch === 'K') return <SerifBold>K</SerifBold>;
  if (ch === '·') return <Dot>·</Dot>;
  return <span>{ch}</span>;
};

const QUOTES: [string, string, string][][] = [
  [
    ['现价', '0.7549', GREEN],
    ['卖出', '0.7550', GREEN],
    ['涨幅', '-0.51%', GREEN],
    ['昨收', '0.7588', '#fff'],
    ['最高', '0.7598', RED],
  ],
  [
    ['涨跌', '-0.0039', GREEN],
    ['买入', '0.7549', GREEN],
    ['振幅', '0.90%', CYAN],
    ['开盘', '0.7589', RED],
    ['最低', '0.7530', GREEN],
  ],
];

const INDEXES = [
  { name: '沪', c: '#fff', basis: 323, cols: '1fr 74px 65px 92px', v: ['3149.92', '+7.37', '+0.23%'], t: '693.8' },
  { name: '深', c: '#ffff80', basis: 335, cols: '1fr 77px 67px 88px', v: ['9983.20', '+41.65', '+0.42%'], t: '885.4' },
  { name: '创', c: '#ffff80', basis: 340, cols: '1fr 68px 69px 99px', v: ['1873.26', '+12.04', '+0.65%'], t: '249.0' },
];

const App = () => (
  <Page>
    <GlobalStyle />
    <TitleBar>
      <Menu>
        {MENU.map((m) => (
          <button key={m}>{m}</button>
        ))}
      </Menu>
      <AppTitle>
        <Logo>同花顺</Logo>
        <span>- 外汇技术分析</span>
      </AppTitle>
      <TitleTools>
        <TitleLink href="#offer">春节假期也可享收益</TitleLink>
        <UserLink href="#account">本本0915</UserLink>
        <IconButton aria-label="消息"><BellIcon /></IconButton>
        <IconButton $after={16} aria-label="皮肤"><ShirtIcon /></IconButton>
        <PillButton $blue>资讯</PillButton>
        <PillButton>委托<Caret /></PillButton>
        <WindowButtons>
          <WindowButton aria-label="最小化">
            <svg width="10" height="12" viewBox="0 0 10 12"><path d="M0 8h10v3H0z" fill="currentColor" /></svg>
          </WindowButton>
          <WindowButton aria-label="还原"><RestoreIcon /></WindowButton>
          <WindowButton $wide aria-label="关闭"><CrossIcon size={9} /></WindowButton>
        </WindowButtons>
      </TitleTools>
    </TitleBar>

    <Toolbar>
      <ToolbarGrip />
      {[
        { label: '自选股', icon: <FolderStarIcon /> },
        { label: '周期', icon: <ClockIcon /> },
        { label: '画线', icon: <PencilIcon /> },
      ].map(({ label, icon }) => (
        <Tool key={label}>
          <SplitButton>
            <SplitMain aria-label={label}>{icon}</SplitMain>
            <SplitCaret aria-label={`${label}菜单`}><Caret /></SplitCaret>
          </SplitButton>
          <span>{label}</span>
        </Tool>
      ))}
    </Toolbar>

    <Main>
      <SideTabs>
        {TABS.map(({ name, h, tone }) => (
          <SideTab key={name} $h={h} $tone={tone}>
            {name === '应用' && <SkipIcon />}
            {[...name].map((ch, i) => (
              <TabGlyph key={i} ch={ch} />
            ))}
          </SideTab>
        ))}
      </SideTabs>
      <Content>
        <Quotes>
          {QUOTES.map((row, r) => (
            <React.Fragment key={r}>
              <PairName $bold={r === 0}>{r === 0 ? 'AUDUSD' : '澳元/美元'}</PairName>
              {row.map(([label, value, color]) => (
                <Quote key={label}>
                  <QuoteLabel>{label}</QuoteLabel>
                  <QuoteValue $c={color}>{value}</QuoteValue>
                </Quote>
              ))}
            </React.Fragment>
          ))}
        </Quotes>
        <Legend $h={15} $pad={1}>
          <LegendItem $c="#c0c0c0" $gap={9}>240分钟(复权)</LegendItem>
          <LegendItem $c="#fff" $gap={7}>MA30: 0.7207<Arrow color={CANDLE_DOWN} /></LegendItem>
          <LegendItem $c="#ff0">MA60: 0.7273<Arrow color={CANDLE_DOWN} /></LegendItem>
        </Legend>
        <Panel $grow>
          <Plot><PriceChart /></Plot>
          <Axis>
            <AxisMark $h={16} $lh={4}>0.7633</AxisMark>
            {PRICES.map((p) => (
              <AxisMark key={p} $h={32}>{p}</AxisMark>
            ))}
          </Axis>
        </Panel>
        <Panel>
          <Plot>
            <Legend $h={16}>
              <LegendItem $c="#ff0">RSI(12,12,24) RSI12: +43.58<Arrow up color={RED} /></LegendItem>
              <HelpButton>指标说明</HelpButton>
            </Legend>
            <RsiChart />
          </Plot>
          <Axis $pad={8} $gap={18}>
            <AxisMark $h={17}>+77.47</AxisMark>
            <AxisMark $h={17}>+49.41</AxisMark>
          </Axis>
        </Panel>
        <Panel>
          <Plot>
            <Legend $h={16}>
              <LegendItem $c="#c0c0c0" $gap={4}>MACD(12,26,9)</LegendItem>
              <LegendItem $c={RED} $gap={7}>MACD: +0.084<Arrow up color={RED} /></LegendItem>
              <LegendItem $c="#fff" $gap={7}>DIFF: -0.177<Arrow up color={RED} /></LegendItem>
              <LegendItem $c="#ff0">DEA: -0.218<Arrow up color={RED} /></LegendItem>
              <HelpButton>指标说明</HelpButton>
            </Legend>
            <MacdChart />
          </Plot>
          <Axis $pad={8} $gap={21}>
            <AxisMark $h={17}>+0.478</AxisMark>
            <AxisMark $h={17}>+0.154</AxisMark>
            <AxisMark $h={17} $c={GREEN}>-0.179</AxisMark>
          </Axis>
        </Panel>
        <DateRow>
          <FirstDates><span>11/28</span><span>11/29</span></FirstDates>
          {DATES.map((d) => (
            <DateMark key={d}>{d}</DateMark>
          ))}
        </DateRow>
      </Content>
    </Main>

    <footer>
      <IndexRow>
        {INDEXES.map(({ name, c, basis, cols, v, t }) => (
          <IndexGroup key={name} $basis={basis} $cols={cols}>
            <IndexName $c={c}><Big>{name}</Big>{v[0]}</IndexName>
            <span>{v[1]}</span>
            <span>{v[2]}</span>
            <Turnover>{t}<Big>亿</Big></Turnover>
          </IndexGroup>
        ))}
        <IndexGroup $basis={368} $cols="1fr 65px 86px 35px">
          <IndexName $c="#ffff80"><span><Big>日经</Big>225</span>18994.11</IndexName>
          <span>+206.12</span>
          <span>+1.10%</span>
          <SettingsButton aria-label="设置"><WrenchIcon /></SettingsButton>
        </IndexGroup>
      </IndexRow>
      <StatusRow>
        {STATUS.map((s) => (
          <StatusLink key={s} href="#status">{s}</StatusLink>
        ))}
        <Ticker>
          <News href="#news1" $w={282}>两市窄幅震荡 关注低位高送转的机会</News>
          <News href="#news2">10:29 我国推行药品购销"两票制" 未来新药审批将更严格</News>
        </Ticker>
        <Search>
          <SearchInput aria-label="搜索" placeholder="代码/名称/简拼/功能" />
          <SearchIcon />
        </Search>
        <Clock>12:33:37</Clock>
      </StatusRow>
      <Desktop />
    </footer>

    <PeriodPalette>
      <PaletteClose aria-label="关闭周期栏"><CrossIcon /></PaletteClose>
      <PeriodGrip>
        <Grip />
      </PeriodGrip>
      <Periods>
        {PERIODS.map((p) => (
          <PeriodButton key={p} $on={p === '240分钟'}>{p}</PeriodButton>
        ))}
      </Periods>
    </PeriodPalette>

    <DrawPalette>
      <PaletteClose aria-label="关闭工具栏"><CrossIcon /></PaletteClose>
      <PaletteGroup $grow={148}>
        <GroupTitle>智能分析</GroupTitle>
        <GroupBody $gap={5} $pad={8}>
          <Grip />
          <OutlineButton>撑压分析</OutlineButton>
          <OutlineButton>黄金分割</OutlineButton>
        </GroupBody>
      </PaletteGroup>
      <PaletteGroup $grow={179}>
        <GroupTitle>自主分析</GroupTitle>
        <GroupBody $gap={0} $pad={1}>
          <DrawButton $w={29} aria-label="线段"><LineIcon /></DrawButton>
          <DrawButton $w={29} aria-label="矩形"><RectIcon /></DrawButton>
          <DrawButton $w={29} aria-label="黄金线"><GannIcon /></DrawButton>
          <DrawButton $w={29} aria-label="波浪"><WaveIcon /></DrawButton>
          <DrawButton $w={29} aria-label="圆"><CircleIcon /></DrawButton>
          <DrawButton $w={29} aria-label="更多"><MoreIcon /></DrawButton>
        </GroupBody>
      </PaletteGroup>
      <PaletteGroup $grow={299}>
        <GroupTitle>辅助工具</GroupTitle>
        <GroupBody $gap={8} $pad={3}>
          <PressedButton $w={24} aria-label="选择"><PointerIcon /></PressedButton>
          <DrawButton $w={28} aria-label="文字"><LetterA>A</LetterA><Caret /></DrawButton>
          <Swatch aria-label="颜色" />
          <DrawButton $w={30} aria-label="清除图形"><PictureCutIcon /><Caret /></DrawButton>
          <DrawButton $w={30} aria-label="删除"><DeleteIcon /><Caret /></DrawButton>
          <DrawButton $w={32} aria-label="设置"><GearIcon /><Caret /></DrawButton>
          <DrawButton $w={30} aria-label="测量"><MeasureIcon /></DrawButton>
          <DrawButton $w={30}>解盘</DrawButton>
        </GroupBody>
      </PaletteGroup>
    </DrawPalette>

    <SpeedBall aria-label="加速">74</SpeedBall>
  </Page>
);

export default App;
